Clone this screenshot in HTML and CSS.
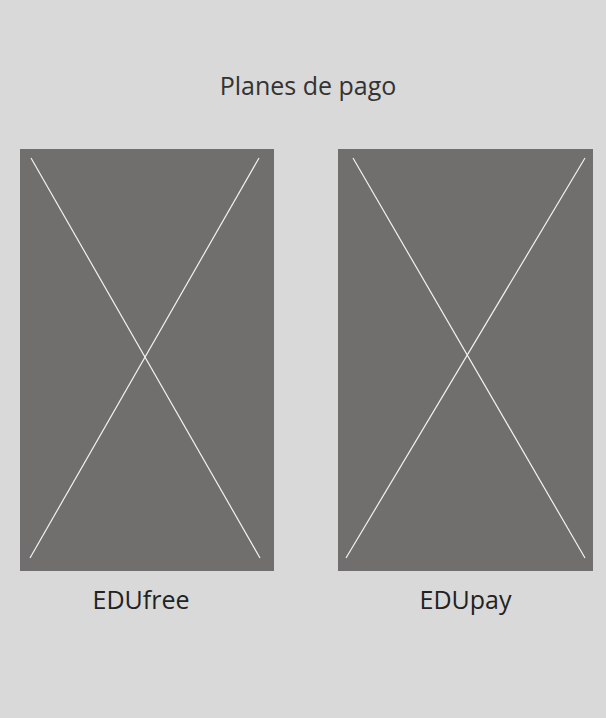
FILE: index.html
```html
<!DOCTYPE html>
<html lang="es">
<head>
<meta charset="utf-8">
<link rel="stylesheet" href="styles.css">
</head>
<body>
<main class="page">
  <h1 class="title">Planes de pago</h1>
  <div class="plans">
    <div class="plan plan-free">
      <div class="thumb">
        <svg viewBox="0 0 254 422" width="254" height="422">
          <line x1="11" y1="9" x2="240" y2="409" />
          <line x1="239" y1="9" x2="10" y2="409" />
        </svg>
      </div>
      <div class="label label-free">EDUfree</div>
    </div>
    <div class="plan plan-pay">
      <div class="thumb">
        <svg viewBox="0 0 255 422" width="255" height="422">
          <line x1="15" y1="9" x2="247" y2="409" />
          <line x1="247" y1="9" x2="8" y2="409" />
        </svg>
      </div>
      <div class="label">EDUpay</div>
    </div>
  </div>
</main>
</body>
</html>
```
FILE: styles.css
```css
html, body {
  margin: 0;
  padding: 0;
  background: #d9d9d9;
}
body {
  width: 606px;
  height: 718px;
  font-family: "Open Sans", "Noto Sans", sans-serif;
}
.page {
  padding-top: 69px;
}
.title {
  margin: 0 0 48px 0;
  padding-left: 10px;
  text-align: center;
  font-weight: 400;
  font-size: 25px;
  line-height: 32px;
  color: #333333;
}
.plans {
  display: flex;
  gap: 64px;
  padding-left: 20px;
}
.plan {
  display: flex;
  flex-direction: column;
  align-items: center;
}
.plan-free { width: 254px; }
.plan-pay { width: 255px; }
.thumb {
  width: 100%;
  height: 422px;
  background: #706f6d;
}
.thumb svg {
  display: block;
}
.thumb line {
  stroke: #f2f2f2;
  stroke-width: 1.2;
}
.label {
  margin-top: 12px;
  font-size: 25px;
  line-height: 32px;
  color: #222222;
}
.label-free {
  margin-right: 12px;
}
```
